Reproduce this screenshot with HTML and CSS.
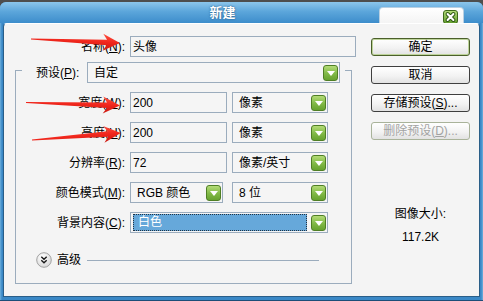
FILE: index.html
```html
<!DOCTYPE html>
<html lang="zh-CN">
<head>
<meta charset="utf-8">
<title>新建</title>
<link rel="stylesheet" href="styles.css">
</head>
<body>
<div class="window">
  <div class="frame">
    <header class="titlebar">
      <h1 class="title">新建</h1>
      <div class="tab">
        <button class="close" type="button" aria-label="关闭">
          <svg width="15" height="14" viewBox="0 0 15 14">
            <defs>
              <linearGradient id="cg" x1="0" y1="0" x2="0" y2="1">
                <stop offset="0" stop-color="#b8de7e"/>
                <stop offset="1" stop-color="#5e9a2a"/>
              </linearGradient>
            </defs>
            <rect x="0.5" y="0.5" width="14" height="13" rx="2.5" fill="url(#cg)" stroke="#3d6a1c"/>
            <path d="M4.6 4 L10.4 10 M10.4 4 L4.6 10" stroke="#2f5a14" stroke-width="4" stroke-linecap="round"/>
            <path d="M4.6 4 L10.4 10 M10.4 4 L4.6 10" stroke="#fff" stroke-width="2" stroke-linecap="round"/>
          </svg>
        </button>
      </div>
    </header>
    <div class="client">
      <div class="main">
        <div class="name-row">
          <label class="lbl">名称(<u>N</u>):</label>
          <div class="field name-field">头像</div>
        </div>
        <fieldset class="group">
          <legend class="preset">
            <span class="lbl preset-lbl">预设(<u>P</u>):</span>
            <div class="select preset-select"><span class="val">自定</span><i class="dd"></i></div>
          </legend>
          <div class="rows">
            <span class="lbl">宽度(<u>W</u>):</span>
            <div class="field">200</div>
            <div class="select"><span class="val">像素</span><i class="dd"></i></div>

            <span class="lbl">高度(<u>H</u>):</span>
            <div class="field">200</div>
            <div class="select"><span class="val">像素</span><i class="dd"></i></div>

            <span class="lbl">分辨率(<u>R</u>):</span>
            <div class="field">72</div>
            <div class="select"><span class="val">像素/英寸</span><i class="dd"></i></div>

            <span class="lbl">颜色模式(<u>M</u>):</span>
            <div class="select mode-select"><span class="val">RGB 颜色</span><i class="dd"></i></div>
            <div class="select"><span class="val">8 位</span><i class="dd"></i></div>

            <span class="lbl">背景内容(<u>C</u>):</span>
            <div class="select bg-select"><span class="val selected">白色</span><i class="dd"></i></div>
          </div>
          <div class="advanced">
            <span class="adv-btn">
              <svg width="16" height="16" viewBox="0 0 16 16">
                <defs>
                  <radialGradient id="ag" cx="0.4" cy="0.3" r="0.8">
                    <stop offset="0" stop-color="#ffffff"/>
                    <stop offset="1" stop-color="#d4d4d4"/>
                  </radialGradient>
                </defs>
                <circle cx="8" cy="8" r="7.3" fill="url(#ag)" stroke="#a2a2a2"/>
                <path d="M5.3 4.8 L8 7.3 L10.7 4.8 M5.3 8.3 L8 10.8 L10.7 8.3" fill="none" stroke="#1a1a1a" stroke-width="1.4"/>
              </svg>
            </span>
            <span class="adv-text">高级</span>
            <span class="adv-line"></span>
          </div>
        </fieldset>
      </div>
      <aside class="side">
        <button class="btn default" type="button">确定</button>
        <button class="btn" type="button">取消</button>
        <button class="btn" type="button">存储预设(<u>S</u>)...</button>
        <button class="btn" type="button" disabled>删除预设(<u>D</u>)...</button>
        <div class="size">
          <div>图像大小:</div>
          <div>117.2K</div>
        </div>
      </aside>
    </div>
  </div>
  <svg class="arrows" width="483" height="301" viewBox="0 0 483 301">
    <defs>
      <linearGradient id="rg" x1="0" y1="0" x2="0" y2="1">
        <stop offset="0" stop-color="#ff5040"/>
        <stop offset="0.5" stop-color="#f0261c"/>
        <stop offset="1" stop-color="#c81810"/>
      </linearGradient>
    </defs>
    <g transform="translate(31 39) rotate(2.6)">
      <polygon points="0,-0.6 76,-2.8 72,-8.5 89,0 72,8.5 76,2.8 0,0.6" fill="url(#rg)"/>
    </g>
    <g transform="translate(26 102.5) rotate(1.9)">
      <polygon points="0,-0.6 81,-2.8 77,-8.5 94,0 77,8.5 81,2.8 0,0.6" fill="url(#rg)"/>
    </g>
    <g transform="translate(32 140) rotate(-4.5)">
      <polygon points="0,-0.6 76,-2.8 72,-8.5 89,0 72,8.5 76,2.8 0,0.6" fill="url(#rg)"/>
    </g>
  </svg>
</div>
</body>
</html>
```

FILE: styles.css
```css
* { box-sizing: border-box; }

html, body {
  margin: 0;
  padding: 0;
}

body {
  width: 483px;
  height: 301px;
  overflow: hidden;
  background: #4e4e4e;
  font: 12px "Liberation Sans", "Noto Sans CJK SC", sans-serif;
  color: #000;
}

.window {
  position: relative;
  width: 483px;
  height: 301px;
  padding-top: 2px;
}

.frame {
  height: 299px;
  display: flex;
  flex-direction: column;
  border-radius: 6px 6px 0 0;
  background: linear-gradient(90deg, #6fb0dd 0, #3a88c6 2px, #3a88c6 calc(100% - 2px), #6fb0dd 100%);
  border-bottom: 1px solid #1d4d78;
}

.titlebar {
  height: 21px;
  flex: none;
  display: flex;
  border-radius: 6px 6px 0 0;
  background: linear-gradient(#8cc6ec 0, #5ca6db 45%, #3d8dcb 100%);
}

.title {
  flex: 1;
  margin: 0;
  padding: 3px 0 0 66px;
  text-align: center;
  font-size: 13px;
  font-weight: bold;
  line-height: 16px;
  color: #fff;
  text-shadow: 0 0 2px #1d4f7a;
}

.tab {
  align-self: flex-end;
  width: 85px;
  height: 16px;
  margin-right: 19px;
  display: flex;
  justify-content: flex-end;
  align-items: flex-start;
  padding: 2px 5px 0 0;
  background: linear-gradient(#ffffff, #f4f4f4);
  border: 1px solid #b9d0e2;
  border-bottom: none;
  border-radius: 4px 4px 0 0;
}

.close {
  display: block;
  padding: 0;
  margin: 0;
  border: none;
  background: none;
  width: 15px;
  height: 14px;
}
.close svg { display: block; }

.client {
  flex: 1;
  margin: 0 3px 3px 3px;
  display: flex;
  gap: 15px;
  padding: 12px 9px 0 11px;
  background: #f4f4f4;
  border: 1px solid #2a5e88;
  border-top-color: #ffffff;
  border-radius: 4px 4px 0 0;
}

.main {
  width: 341px;
  display: flex;
  flex-direction: column;
}

.lbl {
  text-align: right;
  white-space: nowrap;
  line-height: 16px;
}

.name-row {
  display: grid;
  grid-template-columns: 110px 226px;
  column-gap: 5px;
  align-items: center;
}

.field,
.select {
  height: 21px;
  border: 1px solid #9bacbd;
  background: #f5f5f5;
  display: flex;
  align-items: center;
  white-space: nowrap;
  line-height: 16px;
}

.field {
  padding-left: 2px;
}

.select {
  padding: 0 1px 0 6px;
}

.select .val {
  flex: 1;
}

.dd {
  flex: none;
  width: 15px;
  height: 16px;
  border-radius: 3px;
  border: 1px solid #4f7f25;
  background: linear-gradient(#b4dc78, #80b846 55%, #67a22f);
  display: flex;
  align-items: center;
  justify-content: center;
}

.dd::after {
  content: "";
  width: 0;
  height: 0;
  margin-top: 1px;
  border-left: 4px solid transparent;
  border-right: 4px solid transparent;
  border-top: 5px solid #fff;
}

.group {
  width: 337px;
  margin: 1px 0 0 0;
  padding: 9px 0 15px 0;
  border: 1px solid #9bacbd;
  min-width: 0;
}

.preset {
  margin-left: 6px;
  padding: 4px 5px 0 14px;
  display: flex;
  align-items: center;
}

.preset-lbl {
  width: 51px;
  text-align: left;
}

.preset-select {
  width: 253px;
}

.rows {
  display: grid;
  grid-template-columns: 109px 97px 96px;
  grid-auto-rows: 21px;
  column-gap: 5px;
  row-gap: 9px;
  align-items: center;
}

.mode-select {
  width: 93px;
}

.bg-select {
  grid-column: 2 / 4;
  padding-left: 2px;
}

.bg-select .val.selected {
  height: 17px;
  margin-right: 4px;
  padding-left: 4px;
  line-height: 15px;
  color: #fff;
  background: #66a8da;
  border: 1px dotted #223344;
}

.advanced {
  margin-top: 19px;
  padding-left: 20px;
  height: 16px;
  display: flex;
  align-items: center;
}

.adv-btn {
  width: 16px;
  height: 16px;
}
.adv-btn svg { display: block; }

.adv-text {
  margin-left: 5px;
  line-height: 16px;
}

.adv-line {
  flex: 1;
  height: 1px;
  margin: 0 32px 0 6px;
  background: #9bacbd;
}

.side {
  width: 99px;
  padding-top: 2px;
  display: flex;
  flex-direction: column;
  gap: 10px;
}

.btn {
  height: 18px;
  margin: 0;
  padding: 0;
  font: inherit;
  line-height: 14px;
  color: #000;
  border: 1px solid #3f3f3f;
  border-radius: 3px;
  background: linear-gradient(#ffffff, #f3f3f3 55%, #e2e2e2);
}

.btn.default {
  border-color: #4a5f2a;
  box-shadow: inset 0 0 0 1px #bdd39a;
}

.btn:disabled {
  color: #a3a3a3;
  border-color: #a9b39a;
}

.size {
  margin-top: 56px;
  display: flex;
  flex-direction: column;
  align-items: center;
  gap: 7px;
  line-height: 16px;
}

.arrows {
  position: absolute;
  top: 0;
  left: 0;
  pointer-events: none;
}
```
